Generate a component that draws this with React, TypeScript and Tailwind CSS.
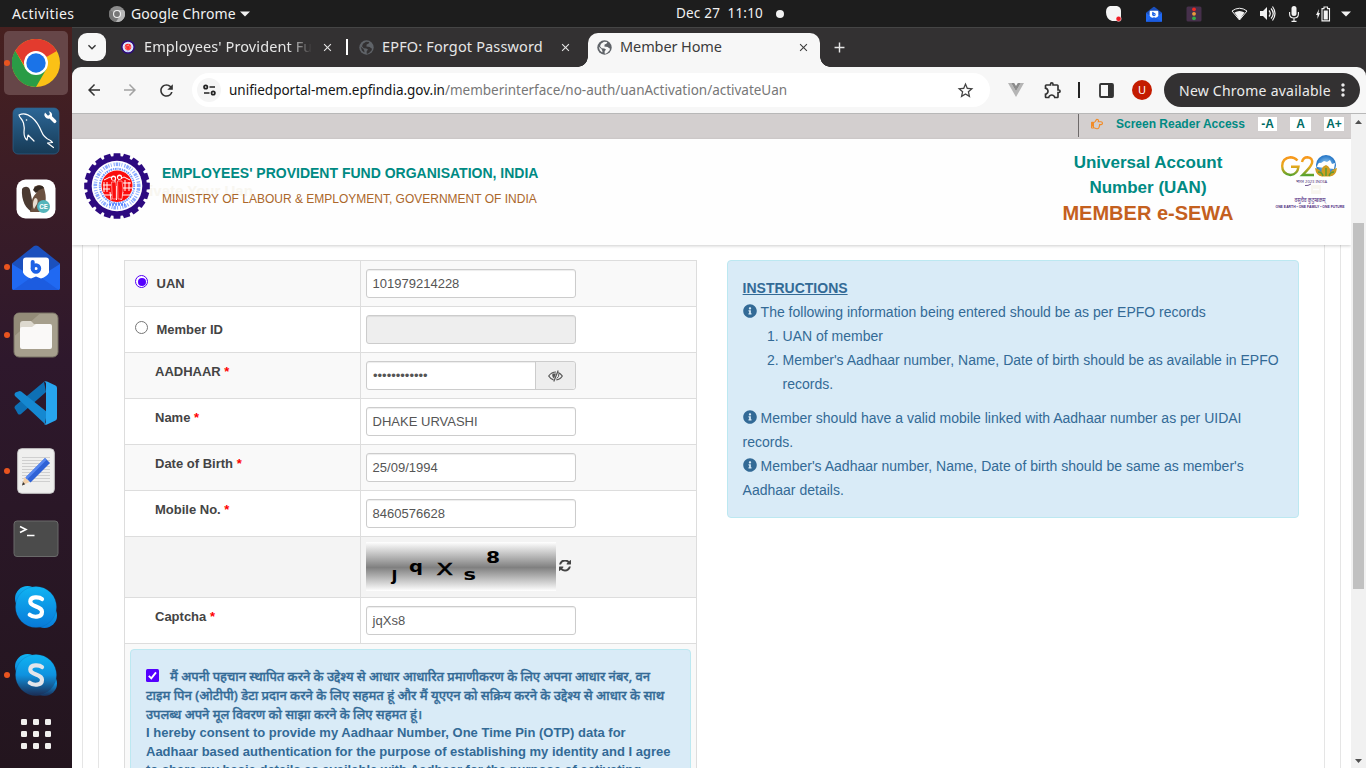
import React from "react";
import { FaInfoCircle, FaRegHandPointRight } from "react-icons/fa";
import { MdOutlineExtension, MdStarBorder, MdArrowBack, MdArrowForward, MdRefresh, MdClose, MdAdd, MdMoreVert, MdKeyboardArrowDown } from "react-icons/md";

const teeth = Array.from({ length: 20 }, (_, i) => i * 18);

function EpfoLogo({ size }: { size: number }) {
  return (
    <svg width={size} height={size} viewBox="0 0 66 66" className="shrink-0">
      <g fill="#2d0a80">
        {teeth.map((a) => (
          <path key={a} d="M29.2 6 L29.7 0.2 H36.3 L36.8 6 Z" transform={`rotate(${a} 33 33)`} />
        ))}
      </g>
      <circle cx="33" cy="33" r="30" fill="#2d0a80" />
      <circle cx="33" cy="33" r="25.3" fill="#fff" />
      <circle cx="33" cy="33" r="21.7" fill="none" stroke="#6f98ff" strokeWidth="3.6" strokeDasharray="1.2 1 2.6 0.8 1.1 1.4 0.8 2" opacity="0.8" />
      <circle cx="33" cy="33" r="17.2" fill="none" stroke="#6f98ff" strokeWidth="2" strokeDasharray="1.1 0.8 1.7 0.9" />
      <path d="M17.500 33a15.500 15.500 0 0 1 31 0q0 5-3 9H20.500q-3-4-3-9z" fill="#fb0d0d" />
      <path d="M20 42h26q-5 7-13 7t-13-7z" fill="#fb0d0d" />
      <path d="M25 51.500h16" stroke="#5a86ff" strokeWidth="2.500" strokeDasharray="2 1" />
      <g stroke="#fff" strokeWidth="1" fill="none">
        <path d="M20 27l6-3 6 3M34 27l6-3 6 3M19 32h8M20 29v10M23 29v10M39 30h8M41 27v11M45 29v9M19 36h7M39 35h9" />
        <path d="M20 42h8M38 42h8M26 39l1 8M39 39l-2 8M31 26v4M32.500 33v14" />
      </g>
      <circle cx="29.500" cy="25" r="2.600" fill="#fff" />
      <circle cx="35.500" cy="24" r="2.600" fill="#fff" />
      <circle cx="29.500" cy="25.400" r="1.500" fill="#fb0d0d" />
      <circle cx="35.500" cy="24.400" r="1.500" fill="#fb0d0d" />
      <path d="M27.500 29h4.300l.5 5v12h-4zM33.500 28h4.500l1 8-1 10h-4z" fill="#fb0d0d" stroke="#fff" strokeWidth=".5" />
    </svg>
  );
}

function Globe({ color, hole }: { color: string; hole: string }) {
  return (
    <svg width="15" height="15" viewBox="0 0 15 15" className="shrink-0">
      <circle cx="7.500" cy="7.500" r="7.200" fill={color} />
      <path d="M7 1.800l3.400.3-1 1.600-1.800.8-.2 1.900 3.200.6 2.400 1.700-.5 1.700-2.200 2.400-1.600 1-1.100-.4.1-2.200 1.300-1.700-1.700-1.100-2.600-.1L3 6.200l1-2.400zM1.700 6.800l2.800 2.300 1 2.200-.3 1.300-2.300-2z" fill={hole} />
    </svg>
  );
}

function ChromeIcon() {
  return (
    <svg width="48" height="48" viewBox="0 0 48 48">
      <circle cx="24" cy="24" r="24" fill="#fbc116" />
      <path d="M24 24 L3.2 12 A24 24 0 0 1 44.8 12 Z" fill="#e33b2e" />
      <path d="M3.2 12A24 24 0 0 0 24 48L34.4 30 24 24 13.6 30z" fill="#2a9c46" />
      <path d="M3.2 12L14 29l2-9 8-8z" fill="#e33b2e" />
      <path d="M3.2 12A24 24 0 0 0 1 30L14 31z" fill="#2a9c46" />
      <circle cx="24" cy="24" r="12" fill="#fff" />
      <circle cx="24" cy="24" r="9.7" fill="#1a73e8" />
    </svg>
  );
}

function DolphinIcon() {
  return (
    <svg width="48" height="48" viewBox="0 0 48 48">
      <defs>
        <linearGradient id="dolph" x1="0" y1="0" x2="0" y2="1">
          <stop offset="0" stopColor="#2c6797" />
          <stop offset="1" stopColor="#173a55" />
        </linearGradient>
      </defs>
      <rect x="1" y="1" width="46" height="46" rx="5" fill="url(#dolph)" stroke="#2e618a" strokeWidth=".7" />
      <path d="M7 8c4-2 9-1 13 2.500 5 4 7 8 9.500 14 1.500 4 4 7 9 9l2 2-5 .5 6 4.500M7 8c.5 3 3.500 4 4.500 8 1 4 1 6 .5 9 0 4 1.500 7 3 8l1-5 6 6" fill="none" stroke="#fff" strokeWidth="1.200" strokeLinejoin="round" strokeLinecap="round" />
      <circle cx="14.500" cy="13" r=".8" fill="#fff" />
      <path d="M33 5.500a4 4 0 0 0 4.500 6l4 4a1.600 1.600 0 0 0 2.500-2.300l-4-4a4 4 0 0 0-3-4.900l1 3-2 1.500z" fill="#fff" />
    </svg>
  );
}

function BeaverIcon() {
  return (
    <svg width="40" height="40" viewBox="0 0 40 40">
      <rect x=".5" y=".5" width="39" height="39" rx="9" fill="#fff" />
      <path d="M6 10c2-3 7-3 8 1l2 10 4 10-3 2c-7-2-12-12-11-23z" fill="#4b3a31" />
      <path d="M18 8c4-3 9-2 10 1l1 4c2 8 0 18-6 20h-9c1-3 3-5 2-8-1-6 3-9 5-12z" fill="#6b5140" />
      <path d="M19 19c3 0 3 3 2 6l-3 5c-2-3-1-9 1-11z" fill="#e8ddd0" />
      <path d="M17 11c2-5 9-6 11-2l-5 2-3 3z" fill="#352820" />
      <circle cx="27.500" cy="27.500" r="6.500" fill="#55b5bb" />
      <text x="27.500" y="30.200" textAnchor="middle" fontSize="7" fill="#fff" className="font-['Roboto',sans-serif] font-bold">CE</text>
    </svg>
  );
}

function MailIcon({ size }: { size: number }) {
  return (
    <svg width={size} height={size} viewBox="0 0 48 48">
      <path d="M0 20.500L22 3q2-1.200 4 0l22 17.500V45q0 2-2 2H2q-2 0-2-2z" fill="#1b50bd" />
      <path d="M0 21l24 15-22.500 11Q0 47 0 45zM48 21L24 36l22.500 11q1.500 0 1.500-2z" fill="#2069f2" />
      <path d="M1.500 47L21 33q3-2 6 0l19.500 14z" fill="#1c5ce0" />
      <path d="M14 14.500h20q3 0 3 3v12q-2 4-8 6l-5-2-5 2q-6-2-8-6v-12q0-3 3-3z" fill="#fff" />
      <path d="M20.700 19v7" stroke="#1d62e6" strokeWidth="4" strokeLinecap="round" />
      <circle cx="24" cy="25.500" r="3.400" fill="none" stroke="#1d62e6" strokeWidth="3.600" />
    </svg>
  );
}

function FilesIcon() {
  return (
    <svg width="46" height="46" viewBox="0 0 46 46">
      <rect x="1" y="1" width="44" height="44" rx="5" fill="#a69f8d" stroke="#787264" />
      <path d="M1.500 24L27 1.500H6Q1.500 1.500 1.500 6z" fill="#938b78" />
      <path d="M7 12q0-3 3-3h8l3 3h14q3 0 3 3v6H7z" fill="#ddd9cf" />
      <path d="M7 17q0-2 2-2h10l4-3h14q2 0 2 2v21q0 2-2 2H9q-2 0-2-2z" fill="#faf9f8" />
    </svg>
  );
}

function CodeIcon() {
  return (
    <svg width="44" height="44" viewBox="0 0 44 44">
      <path d="M1.500 28.500q-2-2 0-4L30 .8 32 11 7 33q-1.500 1-3 0z" fill="#0e70b5" />
      <path d="M1.500 15.500q-2-2 0-4L4.200 10.500q1.500-1 3 0L33 31l-2 12z" fill="#1588d1" />
      <path d="M30 .8q1.500-1 3-.3l8.500 4Q43 5.300 43 7v30q0 1.700-1.500 2.500l-8.500 4q-1.700.7-3-.5 2 0 2-2V2.500q0-1.700-2-1.700z" fill="#27a5ef" />
    </svg>
  );
}

function NotesIcon() {
  return (
    <svg width="38" height="46" viewBox="0 0 38 46">
      <rect x=".7" y=".7" width="36.600" height="44.600" rx="4" fill="#efefee" stroke="#c9c9c9" />
      <path d="M5 9.500h28M5 12.500h28M5 15.500h28M5 18.500h28M5 21.500h28M5 24.500h28M5 27.500h28M5 30.500h28M5 33.500h28" stroke="#cfcfcf" />
      <path d="M5 37.500L7.500 29l5 5z" fill="#f2cfa8" />
      <path d="M5 37.500l1-3.500 2.200 2.200z" fill="#333" />
      <path d="M8.500 29.500L28 10l5 5-19.500 19.500z" fill="#2f62d6" />
      <path d="M8.500 29.500L28 10l1.700 1.700L10 31.400z" fill="#5686ef" />
    </svg>
  );
}

function TerminalIcon() {
  return (
    <svg width="46" height="38" viewBox="0 0 46 38">
      <rect x="1" y="1" width="44" height="35.500" rx="3" fill="#4b4b4b" stroke="#6a6a6a" />
      <path d="M7 6.500l6 3-6 3M14 15.500h7.500" fill="none" stroke="#fff" strokeWidth="1.600" />
    </svg>
  );
}

function SkypeIcon({ dim }: { dim?: boolean }) {
  const id = dim ? "skb" : "ska";
  return (
    <svg width="44" height="44" viewBox="0 0 44 44">
      <defs>
        <linearGradient id={id} x1="0" y1="0" x2="0" y2="1">
          <stop offset="0" stopColor="#10b4f3" />
          <stop offset={dim ? ".5" : "1"} stopColor={dim ? "#0f92df" : "#0879d8"} />
          <stop offset="1" stopColor={dim ? "#1b2d55" : "#0879d8"} />
        </linearGradient>
      </defs>
      <circle cx="13.500" cy="13.500" r="12.500" fill={`url(#${id})`} />
      <circle cx="30.500" cy="30.500" r="12.500" fill={`url(#${id})`} />
      <circle cx="22" cy="22" r="20.500" fill={`url(#${id})`} stroke="#075a9c" strokeOpacity=".35" strokeWidth=".6" />
      <path d="M28 14C25.500 11.800 16.300 11 16.300 16.500c0 6 11.700 4 11.700 10.300 0 6.500-9.500 5.500-12.300 3" fill="none" stroke={dim ? "#e3e5ea" : "#fff"} strokeWidth="4.200" strokeLinecap="round" />
    </svg>
  );
}

function AppsIcon() {
  return (
    <svg width="32" height="32" viewBox="0 0 32 32" fill="#f0efee">
      {[1, 13, 25].map((x) => [1, 13, 25].map((y) => <rect key={`${x}-${y}`} x={x} y={y} width="6" height="6" rx="1.300" />))}
    </svg>
  );
}

function DockItem({ children, running, active }: { children: React.ReactNode; running?: boolean; active?: boolean }) {
  return (
    <div className="flex h-[68px] w-[72px] shrink-0 items-center">
      <span className={running ? "ml-[4px] h-[6px] w-[6px] -mr-[6px] z-10 rounded-full bg-[#e9541f]" : "ml-[4px] w-0"} />
      <div className={active ? "flex h-16 w-16 items-center justify-center rounded-[5px] bg-[#664648]" : "flex h-16 w-16 items-center justify-center"}>
        {children}
      </div>
    </div>
  );
}

function Dock() {
  return (
    <aside className="flex w-[72px] shrink-0 flex-col overflow-hidden bg-gradient-to-b from-[#47201f] via-[#2e182c] via-45% to-[#23151e] pt-[2px]">
      <DockItem running active><ChromeIcon /></DockItem>
      <DockItem><DolphinIcon /></DockItem>
      <DockItem><BeaverIcon /></DockItem>
      <DockItem running><MailIcon size={48} /></DockItem>
      <DockItem running><FilesIcon /></DockItem>
      <DockItem><CodeIcon /></DockItem>
      <DockItem running><NotesIcon /></DockItem>
      <DockItem><TerminalIcon /></DockItem>
      <DockItem><SkypeIcon /></DockItem>
      <DockItem running><SkypeIcon dim /></DockItem>
      <div className="flex h-[50px] items-center justify-center"><AppsIcon /></div>
    </aside>
  );
}

function TopBar() {
  return (
    <header className="flex h-[27px] shrink-0 items-center bg-[#1d1d1d] text-[14px] text-[#f2f2f2]">
      <span className="ml-3 w-[97px] whitespace-nowrap tracking-[0.4px]">Activities</span>
      <svg width="16" height="16" viewBox="0 0 16 16">
        <circle cx="8" cy="8" r="8" fill="#8c8c8c" />
        <path d="M1 4a8 8 0 0 0 6 12l3-6z" fill="#777" />
        <path d="M8 4h7a8 8 0 0 1-8 12l4-6z" fill="#b5b5b5" />
        <circle cx="8" cy="8" r="4" fill="#f2f2f2" />
        <circle cx="8" cy="8" r="2.900" fill="#777" />
      </svg>
      <span className="ml-[6px] w-[109px] whitespace-nowrap tracking-[0.1px]">Google Chrome</span>
      <svg width="10" height="6" viewBox="0 0 10 6"><path d="M0 .5h10L5 5.500z" fill="#f2f2f2" /></svg>
      <span className="ml-[426px] w-[100px] whitespace-pre text-[13.500px] tracking-[0.2px]">Dec 27  11:10</span>
      <span className="h-2 w-2 rounded-full bg-[#f2f2f2]" />
      <div className="ml-[322px] flex items-center">
        <svg width="16" height="16" viewBox="0 0 16 16">
          <path d="M4 0h7q4 1 4 5v5q0 5-4 5H6Q0 13 0 6q0-5 4-6z" fill="#f5f5f5" />
          <circle cx="12.600" cy="12.800" r="2.600" fill="#ee1c25" stroke="#fff" strokeWidth=".5" />
        </svg>
        <span className="ml-6"><MailIcon size={16} /></span>
        <svg className="ml-6" width="16" height="16" viewBox="0 0 16 16">
          <rect x=".5" y=".5" width="15" height="15" rx="1.500" fill="#46304b" />
          <circle cx="8" cy="3.300" r="1.900" fill="#ee2a24" /><circle cx="8" cy="7.800" r="1.900" fill="#eb9b3d" /><circle cx="8" cy="12.300" r="1.900" fill="#35ad47" />
        </svg>
        <svg className="ml-[29px]" width="17" height="14" viewBox="0 0 17 14">
          <path d="M1 4Q8.500-1.500 16 4L8.500 13z" fill="none" stroke="#f2f2f2" />
          <path d="M3.500 5.600q5-3 10 0L8.500 13z" fill="#f2f2f2" />
        </svg>
        <svg className="ml-[12px]" width="16" height="15" viewBox="0 0 16 15">
          <path d="M0 5h3l4-4v13l-4-4H0z" fill="#f2f2f2" />
          <path d="M9 4.500q2.500 3 0 6M11 2.500q4.500 5 0 10M12.500.5q5 7 0 14" fill="none" stroke="#f2f2f2" strokeWidth="1.200" />
        </svg>
        <svg className="ml-[13px]" width="10" height="16" viewBox="0 0 10 16">
          <rect x="2.500" y="0" width="5" height="10" rx="2.500" fill="#f2f2f2" />
          <path d="M.6 6v2q0 4 4.400 4t4.400-4V6M5 12v3M2.500 15.400h5" fill="none" stroke="#f2f2f2" strokeWidth="1.100" />
        </svg>
        <svg className="ml-[17px]" width="15" height="16" viewBox="0 0 15 16">
          <path d="M3 3L0 9h1.500v4L4 7H2.500z" fill="#f2f2f2" />
          <path d="M6 2.600h2V1h3.500v1.600h2v12.300H6z" fill="none" stroke="#f2f2f2" strokeWidth="1.100" />
          <path d="M7.700 4.500h4.100v9H7.700z" fill="#f2f2f2" />
        </svg>
        <svg className="ml-[10px]" width="10" height="6" viewBox="0 0 10 6"><path d="M0 .5h10L5 5.500z" fill="#f2f2f2" /></svg>
      </div>
    </header>
  );
}

function TabStrip() {
  return (
    <div className="flex h-10 items-center border-t border-[#454545] bg-[#333132] text-[14.500px] text-[#e6e6e6]">
      <div className="ml-[6px] mb-px flex h-7 w-7 shrink-0 items-center justify-center rounded-[9px] bg-[#f7f7f7]">
        <MdKeyboardArrowDown size={16} className="text-[#333]" />
      </div>
      <div className="mb-px flex w-[240px] shrink-0 items-center pl-[15px]">
        <EpfoLogo size={14} />
        <span className="ml-[9px] w-[168px] whitespace-nowrap tracking-[0.1px] [mask-image:linear-gradient(to_right,#000_86%,transparent)]">Employees' Provident Fu</span>
        <MdClose size={13} className="ml-[9px] shrink-0 stroke-current" />
      </div>
      <div className="mb-px h-4 w-[2px] shrink-0 bg-white" />
      <div className="mb-px flex w-[240px] shrink-0 items-center pl-[11px]">
        <Globe color="#5f6368" hole="#333132" />
        <span className="ml-[8px] w-[177px] whitespace-nowrap tracking-[0.150px]">EPFO: Forgot Password</span>
        <MdClose size={13} className="shrink-0 stroke-current" />
      </div>
      <div className="relative flex h-[34px] w-[232px] shrink-0 items-center self-end rounded-t-[10px] bg-[#f7f7f7] pl-[9px] pb-[6px] pt-0 text-[#3c3c3c]">
        <Globe color="#5f6368" hole="#f7f7f7" />
        <span className="ml-[8px] w-[177px] whitespace-nowrap tracking-[-0.1px]">Member Home</span>
        <MdClose size={13} className="shrink-0 stroke-current" />
        <span className="absolute bottom-0 -left-[10px] h-[10px] w-[10px] bg-[radial-gradient(circle_at_0_0,transparent_9.500px,#f7f7f7_10px)]" />
        <span className="absolute bottom-0 -right-[10px] h-[10px] w-[10px] bg-[radial-gradient(circle_at_100%_0,transparent_9.500px,#f7f7f7_10px)]" />
      </div>
      <MdAdd size={17} className="ml-[11px] mb-px" />
    </div>
  );
}

function Toolbar() {
  return (
    <div className="bg-[#333132]">
      <div className="flex h-[46px] items-center rounded-t-[9px] bg-[#f7f7f7] text-[#333]">
        <MdArrowBack size={18} className="ml-[13px] shrink-0" />
        <MdArrowForward size={18} className="ml-[18px] shrink-0 text-[#a3a3a3]" />
        <MdRefresh size={19} className="ml-[18px] shrink-0" />
        <div className="ml-[16px] flex h-[34px] w-[798px] shrink-0 items-center rounded-full bg-white">
          <span className="ml-[5px] flex h-6 w-6 items-center justify-center rounded-full bg-[#f5f5f5]">
            <svg width="13" height="12" viewBox="0 0 13 12" fill="none" stroke="#222" strokeWidth="1.700">
              <circle cx="2.700" cy="3" r="1.700" /><path d="M6.500 3H12M1 9h5.500" /><circle cx="10.200" cy="9" r="1.700" />
            </svg>
          </span>
          <span className="ml-[8px] w-[727px] whitespace-nowrap text-[13.500px] tracking-[-0.012px] text-[#777]">
            <span className="text-[#151515]">unifiedportal-mem.epfindia.gov.in</span>/memberinterface/no-auth/uanActivation/activateUan
          </span>
          <MdStarBorder size={19} className="shrink-0 text-[#444]" />
        </div>
        <svg className="ml-[18px] shrink-0" width="16" height="14" viewBox="0 0 16 14">
          <path d="M0 0h3.200L8 8.300 12.800 0H16L8 14z" fill="#b5b5b5" /><path d="M3.200 0h3L8 3.100 9.800 0h3L8 8.300z" fill="#8b8b8b" />
        </svg>
        <MdOutlineExtension size={20} className="ml-[19px] shrink-0" />
        <span className="ml-[15px] h-4 w-[2px] bg-[#222]" />
        <svg className="ml-[19px] shrink-0" width="15" height="15" viewBox="0 0 15 15">
          <rect x="1" y="1" width="13" height="13" rx="1" fill="none" stroke="#333" strokeWidth="1.800" /><path d="M9 1h5v13H9z" fill="#333" />
        </svg>
        <span className="ml-[18px] flex h-5 w-5 shrink-0 items-center justify-center rounded-full bg-[#c41c00] text-[11px] text-white">U</span>
        <div className="ml-[12px] flex h-[34px] w-[196px] shrink-0 items-center rounded-full bg-[#333132] pl-[15px] text-[14px] text-[#ececec]">
          <span className="w-[154px] whitespace-nowrap tracking-[0.240px]">New Chrome available</span>
          <MdMoreVert size={20} className="shrink-0" />
        </div>
      </div>
    </div>
  );
}

function G20() {
  return (
    <svg width="72" height="58" viewBox="0 0 72 58" className="shrink-0">
      <defs>
        <linearGradient id="g20" gradientUnits="userSpaceOnUse" x1="0" y1="3" x2="0" y2="22">
          <stop offset="0" stopColor="#f8981d" /><stop offset=".5" stopColor="#e5a81c" /><stop offset="1" stopColor="#4fa32f" />
        </linearGradient>
        <radialGradient id="orb"><stop offset="0" stopColor="#a9dcff" /><stop offset="1" stopColor="#2072c4" /></radialGradient>
      </defs>
      <path d="M23.500 6.500Q20.500 3.200 16.500 3.200Q8.200 4 8.200 12t8.300 9q7-.5 8-8.300h-7.500M28 8q1-4.800 5.500-4.800 5.500.5 4.500 6-1.200 4-9.500 11.800H40" fill="none" stroke="url(#g20)" strokeWidth="2.400" />
      <circle cx="52" cy="11" r="10" fill="url(#orb)" />
      <path d="M43 13q1-5 4-4l3-2 3 1 3-2 2 4 3-1-1 6z" fill="#fff" />
      <path d="M41 14q5 1 6.500 5-1-6 4.500-8 5 2 4 8 2-4 7-5-1 8-7 8.500h-8q-6-.500-7-8.500z" fill="#cf9d22" />
      <path d="M44 18q4 0 5 4M52 14v8M60 18q-4 0-5 4" stroke="#5d9b35" strokeWidth="1.500" fill="none" />
      <text x="22" y="29" fontSize="4.300" fill="#513277" textLength="31" lengthAdjust="spacingAndGlyphs" className="font-['Noto_Sans',sans-serif]">भारत 2023 INDIA</text>
      <path d="M31 31.500q3 .5 6-1.500" stroke="#4d2c73" fill="none" strokeWidth=".8" />
      <rect x="37" y="31" width="10" height="9" fill="#f8f6ef" /><path d="M39 35.500h6" stroke="#fff" strokeWidth="1.500" />
      <text x="20.500" y="47.500" fontSize="5.500" fill="#4b1f7d" textLength="31" lengthAdjust="spacingAndGlyphs" className="font-['Noto_Sans',sans-serif]">वसुधैव कुटुम्बकम्</text>
      <text x="1.500" y="54" fontSize="3.400" fill="#4b1f7d" textLength="69" lengthAdjust="spacingAndGlyphs" className="font-['Liberation_Sans',sans-serif] font-bold">ONE EARTH • ONE FAMILY • ONE FUTURE</text>
    </svg>
  );
}

function SiteHeader() {
  return (
    <>
      <div className="flex h-[25px] shrink-0 bg-[#d3cfcf] text-[12px] font-bold leading-[14px] text-[#008a83]">
        <div className="ml-[1006px] flex h-[23px] items-start border-l border-[#6e6a6a] pt-[3px]">
          <FaRegHandPointRight size={12} className="ml-[12px] mt-[1px] w-[12px] text-[#f28c28]" />
          <span className="ml-[13px] w-[142px] whitespace-nowrap">Screen Reader Access</span>
          <span className="h-[14px] w-[19px] bg-white text-center text-[#006b64]">-A</span>
          <span className="ml-[13px] h-[14px] w-[21px] bg-white text-center text-[#006b64]">A</span>
          <span className="ml-[13px] h-[14px] w-[20px] bg-white text-center text-[#006b64]">A+</span>
        </div>
      </div>
      <div className="relative z-10 flex h-[106px] shrink-0 bg-[#fefefe] shadow-[0_1px_3px_rgba(0,0,0,0.2)]">
        <span className="absolute left-[53px] top-[43px] text-[15px] font-bold leading-[18px] text-[#f8f6f0]">Activate Your Uan</span>
        <div className="relative ml-[12px] mt-[14px]"><EpfoLogo size={66} /></div>
        <div className="relative ml-[12px] mt-[22px] w-[830px] whitespace-nowrap">
          <div className="text-[14px] font-bold leading-6 text-[#008a83]">EMPLOYEES' PROVIDENT FUND ORGANISATION, INDIA</div>
          <div className="mt-[2px] text-[12px] leading-6 text-[#ab672a]">MINISTRY OF LABOUR &amp; EMPLOYMENT, GOVERNMENT OF INDIA</div>
        </div>
        <div className="mt-[11px] w-[312px] text-center font-bold">
          <div className="text-[17px] leading-[25px] text-[#008a83]">Universal Account<br />Number (UAN)</div>
          <div className="mt-[1px] text-[20px] leading-[24px] text-[#c4601e]">MEMBER e-SEWA</div>
        </div>
        <div className="-ml-[30px] mt-[15px]"><G20 /></div>
      </div>
    </>
  );
}

function Row({ label, mark, odd, radio, tall, children }: { label?: string; mark?: boolean; odd?: boolean; radio?: "on" | "off"; tall?: boolean; children: React.ReactNode }) {
  return (
    <div className={`flex border-b border-[#ddd] ${tall ? "h-[61px] bg-[#f4f4f4]" : odd ? "h-[46px] bg-[#f9f9f9]" : "h-[46px] bg-white"}`}>
      <div className="flex w-[236px] shrink-0 border-r border-[#ddd] text-[13px] font-bold leading-[18px] text-[#444]">
        {radio ? (
          <>
            <span className={`ml-[10px] mt-[14px] flex h-[13px] w-[13px] items-center justify-center rounded-full border bg-white ${radio === "on" ? "border-[#5500f5]" : "border-[#767676]"}`}>
              {radio === "on" && <span className="h-[8px] w-[8px] shrink-0 rounded-full bg-[#5500ff]" />}
            </span>
            <span className="ml-[8.500px] mt-[14px]">{label}</span>
          </>
        ) : (
          <span className="ml-[30px] mt-[10px]">{label} {mark && <span className="text-[#ff0000]">*</span>}</span>
        )}
      </div>
      {children}
    </div>
  );
}

function Field({ value, disabled }: { value?: string; disabled?: boolean }) {
  return (
    <div className={`ml-[5px] mt-[8px] flex h-[29px] w-[210px] items-center rounded-[3px] border border-[#ccc] pl-[5.600px] text-[13px] text-[#555] shadow-[inset_0_1px_1px_rgba(0,0,0,0.075)] ${disabled ? "bg-[#eee]" : "bg-white"}`}>
      {value}
    </div>
  );
}

function Captcha() {
  return (
    <div className="ml-[5px] mt-[5px] flex items-start">
      <div className="h-[49px] w-[190px] bg-[linear-gradient(to_bottom,#fff,#808080_52%,#fff)]">
        <svg width="190" height="49" viewBox="0 0 190 49" fill="#000" className="font-['DejaVu_Sans','Noto_Sans',sans-serif] font-bold">
          <g fontSize="15">
            <text transform="translate(25.500 38) scale(1.150 1.200)">ȷ</text>
            <text transform="translate(43 29.500) scale(1.300 1)">q</text>
            <text transform="translate(70.500 33) scale(1.600 1.050)" className="font-normal" stroke="#000" strokeWidth=".5">X</text>
            <text transform="translate(97.500 38) scale(1.400 1)">s</text>
            <text transform="translate(120 21) scale(1.350 1)">8</text>
          </g>
        </svg>
      </div>
      <svg className="ml-[3px] mt-[18px]" width="12" height="12" viewBox="0 64 1536 1536" fill="#444">
        <path d="M1511 928q0 5-1 7-64 268-268 434.500t-478 166.500q-146 0-282.500-55t-243.500-157l-129 129q-19 19-45 19t-45-19-19-45v-448q0-26 19-45t45-19h448q26 0 45 19t19 45-19 45l-137 137q71 66 161 102t187 36q134 0 250-65t186-179q11-17 53-117 8-23 30-23h192q13 0 22.500 9.500t9.500 22.500zm25-800v448q0 26-19 45t-45 19h-448q-26 0-45-19t-19-45 19-45l138-138q-148-137-349-137-134 0-250 65t-186 179q-11 17-53 117-8 23-30 23h-199q-13 0-22.500-9.500t-9.500-22.500v-7q65-268 270-434.500t480-166.500q146 0 284 55.500t245 156.500l130-129q19-19 45-19t45 19 19 45z" />
      </svg>
    </div>
  );
}

function Form() {
  return (
    <div className="h-[600px] w-[573px] shrink-0 border border-[#ddd] bg-[#f9f9f9]">
      <Row label="UAN" radio="on" odd><Field value="101979214228" /></Row>
      <Row label="Member ID" radio="off"><Field disabled /></Row>
      <Row label="AADHAAR" mark odd>
        <div className="ml-[5px] mt-[8px] flex h-[29px] w-[210px] rounded-[3px] border border-[#ccc] bg-white shadow-[inset_0_1px_1px_rgba(0,0,0,0.075)]">
          <div className="flex w-[168px] items-center pl-[6px] text-[13px] text-[#555]">••••••••••••</div>
          <div className="flex flex-1 items-center justify-center rounded-r-[3px] border-l border-[#ccc] bg-[#eee]">
            <svg width="15" height="12" viewBox="0 0 15 12" fill="none" stroke="#555">
              <path d="M5.500 9.800Q2.500 9 .7 6q2.800-4 7.300-4M10.200 2.600Q12.700 3.600 14.300 6q-2.200 3.600-6 3.900" strokeWidth="1.200" />
              <path d="M10.200.5L5.800 11.500" strokeWidth="1.200" /><path d="M4.500 3.500h3.500L6 8.500Q3.500 6.500 4.500 3.500z" fill="#555" stroke="none" /><path d="M10.800 4q.5 2.500-2 4.500" />
            </svg>
          </div>
        </div>
      </Row>
      <Row label="Name" mark><Field value="DHAKE URVASHI" /></Row>
      <Row label="Date of Birth" mark odd><Field value="25/09/1994" /></Row>
      <Row label="Mobile No." mark><Field value="8460576628" /></Row>
      <Row tall><Captcha /></Row>
      <Row label="Captcha" mark><Field value="jqXs8" /></Row>
      <div className="ml-[5px] mt-[5px] h-[200px] w-[561px] rounded-[4px] border border-[#bce8f1] bg-[#d9ebf7] pl-[15px] pt-[17px] text-[13px] font-bold leading-[18.600px] text-[#336a96]">
        <div className="flex h-[19px] items-center whitespace-nowrap font-['Noto_Sans',sans-serif] text-[12.750px] [-webkit-text-stroke:0.350px_#336a96]">
          <svg width="13" height="13" viewBox="0 0 13 13" className="mr-[11px] mb-[2px] shrink-0">
            <rect width="13" height="13" rx="1.500" fill="#5500ff" /><path d="M2.800 6.800l2.500 2.500 4.700-6" fill="none" stroke="#fff" strokeWidth="1.900" />
          </svg>
          <span className="font-medium">मैं अपनी पहचान स्थापित करने के उद्देश्य से आधार आधारित प्रमाणीकरण के लिए अपना आधार नंबर, वन</span>
        </div>
        <div className="whitespace-nowrap font-['Noto_Sans',sans-serif] text-[12.840px] font-medium [-webkit-text-stroke:0.350px_#336a96]">
          <div className="h-[18.600px]">टाइम पिन (ओटीपी) डेटा प्रदान करने के लिए सहमत हूं और मैं यूएएन को सक्रिय करने के उद्देश्य से आधार के साथ</div>
          <div className="h-[18.600px] text-[12.700px]">उपलब्ध अपने मूल विवरण को साझा करने के लिए सहमत हूं।</div>
        </div>
        <div className="mt-[1px] whitespace-nowrap">
          <div>I hereby consent to provide my Aadhaar Number, One Time Pin (OTP) data for</div>
          <div>Aadhaar based authentication for the purpose of establishing my identity and I agree</div>
          <div>to share my basic details as available with Aadhaar for the purpose of activating</div>
        </div>
      </div>
    </div>
  );
}

function Instructions() {
  const info = <FaInfoCircle size={14} className="mr-[4px] mb-[5px] inline-block align-middle" />;
  return (
    <div className="ml-[30px] h-[258px] w-[572px] shrink-0 rounded-[4px] border border-[#bce8f1] bg-[#d9ebf7] pl-[14.600px] pt-[15px] text-[14px] leading-6 text-[#336a96]">
      <div className="font-bold underline">INSTRUCTIONS</div>
      <div className="h-6">{info}The following information being entered should be as per EPFO records</div>
      <ol className="mb-[10px] list-decimal pl-[40px]">
        <li>UAN of member</li>
        <li>Member's Aadhaar number, Name, Date of birth should be as available in EPFO<br />records.</li>
      </ol>
      <div className="h-12">{info}Member should have a valid mobile linked with Aadhaar number as per UIDAI<br />records.</div>
      <div className="h-12">{info}Member's Aadhaar number, Name, Date of birth should be same as member's<br />Aadhaar details.</div>
    </div>
  );
}

function Scrollbar() {
  return (
    <div className="flex w-[15px] shrink-0 flex-col items-center bg-[#f1f1f1]">
      <svg width="15" height="15" viewBox="0 0 15 15"><path d="M4 10h7L7.500 6z" fill="#505050" /></svg>
      <div className="mt-[94px] h-[366px] w-[11px] bg-[#c1c1c1]" />
      <svg className="mt-auto" width="15" height="15" viewBox="0 0 15 15"><path d="M4 6h7l-3.500 4z" fill="#505050" /></svg>
    </div>
  );
}

export default function App() {
  return (
    <div className="flex h-[768px] w-[1366px] flex-col overflow-hidden bg-white font-['Noto_Sans',sans-serif]">
      <TopBar />
      <div className="flex min-h-0 flex-1">
        <Dock />
        <main className="flex min-h-0 w-[1294px] flex-col">
          <TabStrip />
          <Toolbar />
          <div className="flex min-h-0 flex-1 border-t border-[#b8b8b8] font-['Liberation_Sans',Arial,sans-serif]">
            <div className="flex w-[1279px] shrink-0 flex-col overflow-hidden">
              <SiteHeader />
              <div className="ml-[10px] h-[523px] w-[1259px] shrink-0 overflow-hidden border-x border-[#e5e5e5] pl-[15px] pr-[15px]">
                <div className="flex h-full border-x border-[#e5e5e5] pl-[25px] pt-[15px]">
                  <Form />
                  <Instructions />
                </div>
              </div>
            </div>
            <Scrollbar />
          </div>
        </main>
      </div>
    </div>
  );
}
